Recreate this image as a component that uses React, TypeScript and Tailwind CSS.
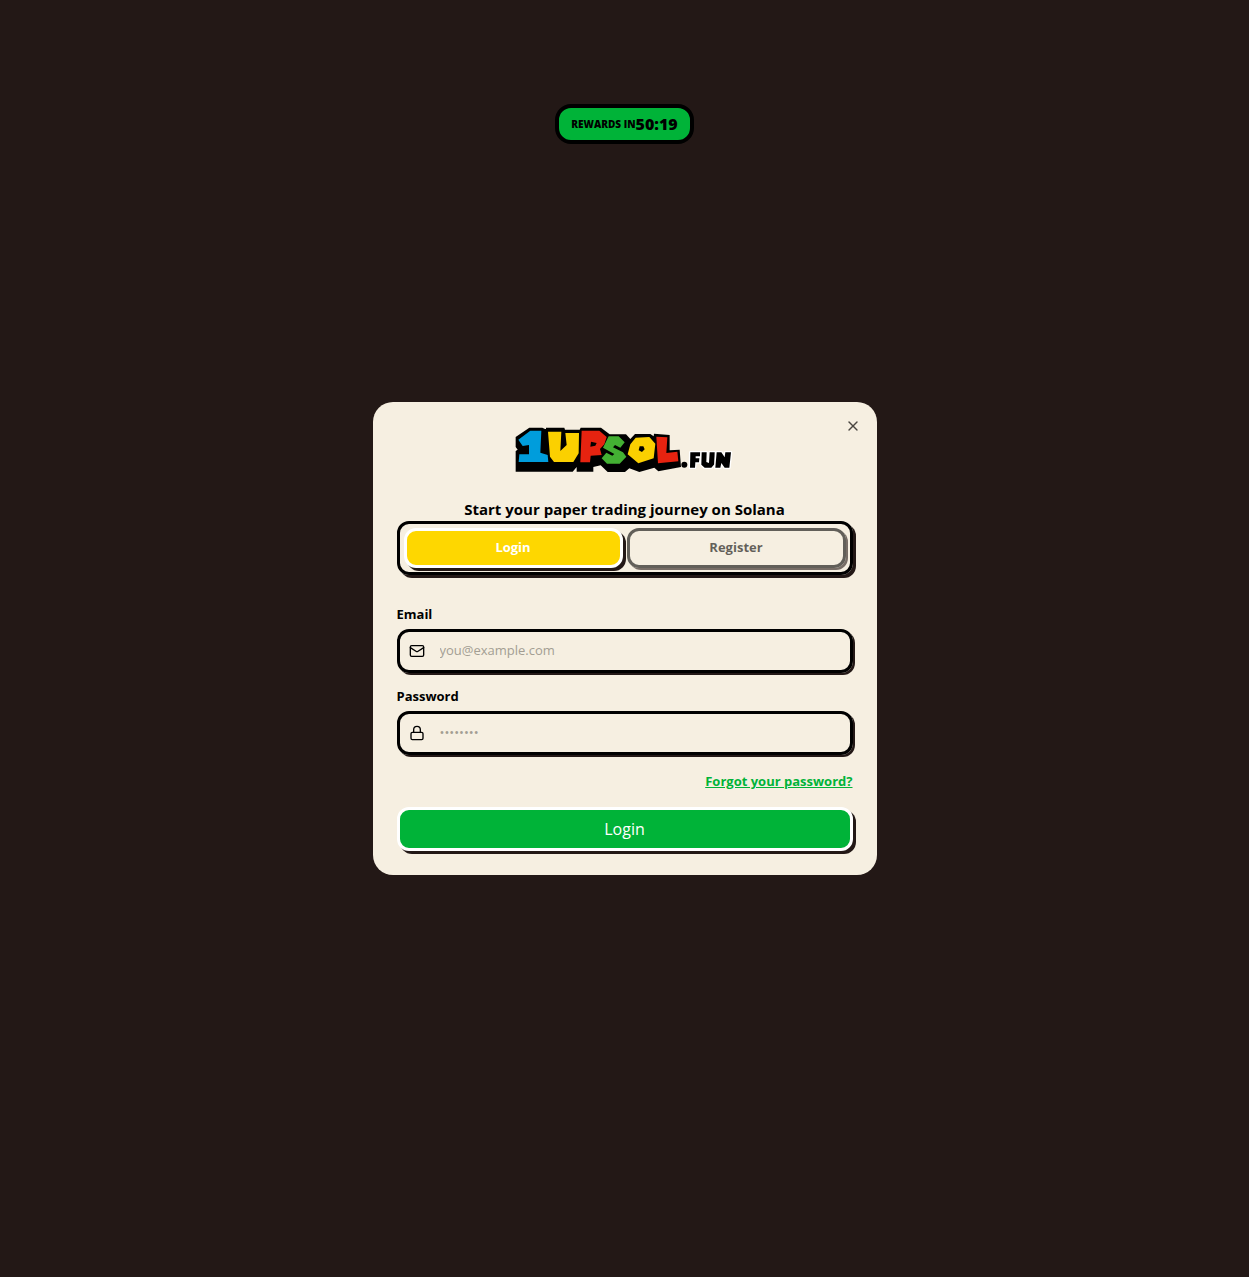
import { useState } from "react";
import { Lock, Mail, X } from "lucide-react";

function Logo() {
  return (
    <svg
      role="img"
      aria-label="1UPSOL.FUN"
      viewBox="35 33 654 135"
      className="h-[45px] w-[218px] overflow-visible"
    >
      <path
        fill="#000"
        d="M34 66 75 38H114L122 42H125V38H180L182 44H226L229 38H290L316 58H365L378 72 392 57H438L448 64 449 56 496 60 496 106 526 104 530 156 462 169 450 158 405 171 375 160 362 171H310L289 151 267 156V170H217V156L205 170H34V108L40 104 34 96Z"
      />
      <path fill="#009ddc" d="M42 74 78 47H111L108 113 130 120 132 141H43L45 118H74V90L55 93Z" />
      <path fill="#fbd000" d="M131 50H171L168 108 187 90 183 54H224L223 115 207 141H149L137 125Z" />
      <path
        fill="#e62310"
        fillRule="evenodd"
        d="M232 47H285L307 66 300 88 287 102 292 120 259 122 257 142H228ZM260 80 277 84 273 92 258 95Z"
      />
      <path
        fill="#43b033"
        d="M313 64H343L361 82 348 98 332 90 326 97 356 112 366 125 346 146H308L292 130 306 113 324 122 330 117 296 98Z"
      />
      <path
        fill="#fbd000"
        fillRule="evenodd"
        d="M394 68 435 66 453 86 448 130 402 145 370 118 378 88ZM406 94 403 106 413 111 421 103 417 94Z"
      />
      <path fill="#e62310" d="M456 65 489 67 486 114 519 110 522 139 461 145Z" />
      <g fill="#000" stroke="#fff" strokeWidth="8" strokeLinejoin="round" paintOrder="stroke">
        <path d="M558 112H588L587 124H574V130H585L584 142H573L572 158H557Z" />
        <path d="M592 112H607L606 141 614 144 616 112H631L630 148 621 158H601L591 149Z" />
        <path d="M637 112H651L661 127 663 112H680L675 158H661L651 144 648 158H633Z" />
      </g>
      <circle cx="540" cy="149" r="9" />
    </svg>
  );
}

function Field(props: {
  id: string;
  label: string;
  type: string;
  placeholder: string;
  icon: React.ReactNode;
}) {
  return (
    <div className="flex flex-col gap-1">
      <label htmlFor={props.id} className="self-start text-[13px] leading-[22px] font-bold">
        {props.label}
      </label>
      <div className="flex h-11 items-center gap-[15px] rounded-xl border-3 border-black px-[9px] shadow-[2px_2px_0_#231816]">
        {props.icon}
        <input
          id={props.id}
          type={props.type}
          placeholder={props.placeholder}
          className="min-w-0 flex-1 bg-transparent text-[13px] outline-none placeholder:text-[#a39e93]"
        />
      </div>
    </div>
  );
}

export default function App() {
  const [tab, setTab] = useState("login");
  const active = "border-white bg-[#fed700] text-white shadow-[3px_3px_0_#231816]";
  const idle = "border-black opacity-60 shadow-[2px_2px_0_#231816]";
  return (
    <div className="min-h-screen bg-[#231816] font-['Open_Sans','Noto_Sans',sans-serif] text-black">
      <header className="flex justify-center pt-26">
        <div className="flex h-10 items-center rounded-2xl border-4 border-black bg-[#00b338] px-3 font-extrabold">
          <span className="text-[10px]">REWARDS IN</span>
          <span className="text-base">50:19</span>
        </div>
      </header>

      <div className="fixed inset-0 grid place-items-center p-4">
        <section
          role="dialog"
          aria-label="Login"
          className="relative w-full max-w-[504px] rounded-[20px] bg-[#f6efe1] p-6"
        >
          <button
            type="button"
            aria-label="Close"
            className="absolute top-4 right-4 text-[#4a4641]"
          >
            <X size={16} strokeWidth={2} />
          </button>
          <div className="flex h-[71px] justify-center">
            <Logo />
          </div>
          <p className="text-center text-[15px] leading-6 font-bold">
            Start your paper trading journey on Solana
          </p>
          <div
            role="tablist"
            className="grid grid-cols-2 gap-1 rounded-xl border-3 border-black p-1 shadow-[3px_3px_0_#231816]"
          >
            <button
              type="button"
              role="tab"
              aria-selected={tab === "login"}
              onClick={() => setTab("login")}
              className={`h-10 rounded-xl border-3 text-[13px] font-bold ${tab === "login" ? active : idle}`}
            >
              Login
            </button>
            <button
              type="button"
              role="tab"
              aria-selected={tab === "register"}
              onClick={() => setTab("register")}
              className={`h-10 rounded-xl border-3 text-[13px] font-bold ${tab === "register" ? active : idle}`}
            >
              Register
            </button>
          </div>
          <form className="mt-7 flex flex-col" onSubmit={(e) => e.preventDefault()}>
            <div className="flex flex-col gap-3">
              <Field
                id="email"
                label="Email"
                type="email"
                placeholder="you@example.com"
                icon={<Mail size={16} className="shrink-0" />}
              />
              <Field
                id="password"
                label="Password"
                type="password"
                placeholder="••••••••"
                icon={<Lock size={16} className="shrink-0" />}
              />
            </div>
            <a
              href="#forgot"
              className="mt-4 self-end text-[13px] leading-5 font-bold text-[#00b338] underline"
            >
              Forgot your password?
            </a>
            <button
              type="submit"
              className="mt-4 h-11 rounded-xl border-3 border-white bg-[#00b338] text-base text-white shadow-[3px_3px_0_#231816]"
            >
              Login
            </button>
          </form>
        </section>
      </div>
    </div>
  );
}
